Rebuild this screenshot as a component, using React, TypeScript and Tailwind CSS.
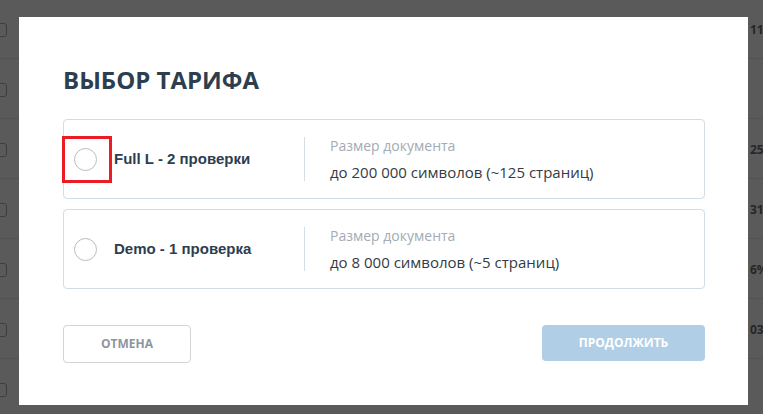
import { useState } from 'react';

type Tariff = {
  id: string;
  name: string;
  limit: string;
};

const tariffs: Tariff[] = [
  { id: 'full-l', name: 'Full L - 2 проверки', limit: 'до 200 000 символов (~125 страниц)' },
  { id: 'demo', name: 'Demo - 1 проверка', limit: 'до 8 000 символов (~5 страниц)' },
];

// rows of the list that sits under the dialog
const backdropRows = ['11%', '', '25%', '31%', '6%', '03%', ''];

function BackdropTable() {
  return (
    <div className="flex flex-col -mt-px">
      {backdropRows.map((value, i) => (
        <div key={i} className="h-[60px] pt-[3px] flex items-center justify-between border-b border-[#525252]">
          <div className="w-[14px] h-[14px] -ml-[7px] rounded-[3px] border border-[#3e3e3e]" />
          <span className="w-[13px] overflow-hidden whitespace-nowrap text-[12px] font-bold text-[#262626] font-['Open_Sans',sans-serif]">
            {value}
          </span>
        </div>
      ))}
    </div>
  );
}

function Radio({ checked }: { checked: boolean }) {
  return (
    <span className="w-[23px] h-[23px] rounded-full border-[1.5px] border-[#bcbcbc] flex items-center justify-center shrink-0">
      {checked && <span className="w-[11px] h-[11px] rounded-full bg-[#2c3e50]" />}
    </span>
  );
}

function TariffCard({ tariff, checked, focused, onSelect }: { tariff: Tariff; checked: boolean; focused: boolean; onSelect: () => void }) {
  return (
    <div
      onClick={onSelect}
      className="h-[80px] flex items-center border border-[#d2dce5] rounded-[4px] cursor-pointer"
    >
      <div className="relative ml-[10px] flex items-center">
        <Radio checked={checked} />
        {focused && (
          <span className="absolute -left-[12px] -top-[12px] w-[50px] h-[47px] border-[3px] border-[#ec1c24]" />
        )}
      </div>
      <div className="ml-[17px] w-[190px] text-[15px] leading-[18px] font-bold text-[#2c3e50] font-['Liberation_Sans',Arial,sans-serif]">
        {tariff.name}
      </div>
      <div className="w-px h-[44px] bg-[#d2dde7]" />
      <div className="pl-[25px] font-['Open_Sans',sans-serif] leading-[26px]">
        <div className="text-[14px] text-[#a3abb3]">Размер документа</div>
        <div className="text-[15px] text-[#333b44]">{tariff.limit}</div>
      </div>
    </div>
  );
}

export default function App() {
  const [selected, setSelected] = useState<string | null>(null);

  return (
    <div className="relative w-[763px] h-[414px] overflow-hidden bg-[#5a5a5a]">
      <BackdropTable />

      <div className="absolute left-[19px] top-[17px] w-[729px] h-[388px] bg-white pt-[47px] pl-[44px] pr-[43px] font-['Open_Sans',sans-serif]">
        <h2 className="text-[24px] leading-[32px] font-bold text-[#2d3e4f]">ВЫБОР ТАРИФА</h2>

        <div className="mt-[23px] flex flex-col gap-[10px]">
          {tariffs.map((t, i) => (
            <TariffCard
              key={t.id}
              tariff={t}
              checked={selected === t.id}
              focused={i === 0}
              onSelect={() => setSelected(t.id)}
            />
          ))}
        </div>

        <div className="mt-[36px] flex items-start justify-between">
          <button className="w-[128px] h-[38px] rounded-[4px] border border-[#d4d4d4] bg-white text-[12px] font-bold text-[#8c96a1]">
            ОТМЕНА
          </button>
          <button className="w-[163px] h-[36px] rounded-[4px] bg-[#b0cfe7] text-[12px] font-bold text-white">
            ПРОДОЛЖИТЬ
          </button>
        </div>
      </div>
    </div>
  );
}
